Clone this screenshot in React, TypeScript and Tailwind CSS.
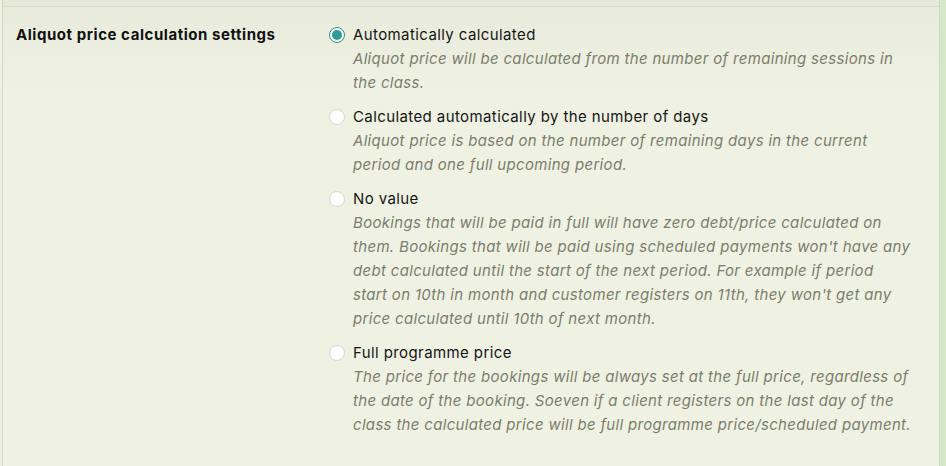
import React from "react";

const options: { title: string; desc: React.ReactNode; selected: boolean }[] = [
  {
    title: "Automatically calculated",
    desc: "Aliquot price will be calculated from the number of remaining sessions in the class.",
    selected: true,
  },
  {
    title: "Calculated automatically by the number of days",
    desc: "Aliquot price is based on the number of remaining days in the current period and one full upcoming period.",
    selected: false,
  },
  {
    title: "No value",
    desc: (
      <>
        Bookings that will be paid in full will have zero debt/price calculated on them. Bookings that will be paid
        using scheduled payments won't have any debt calculated until the start of the next period. For example if
        period
        <br />
        start on 10th in month and customer registers on 11th, they won't get any price calculated until 10th of next
        month.
      </>
    ),
    selected: false,
  },
  {
    title: "Full programme price",
    desc: "The price for the bookings will be always set at the full price, regardless of the date of the booking. Soeven if a client registers on the last day of the class the calculated price will be full programme price/scheduled payment.",
    selected: false,
  },
];

function Radio({ selected }: { selected: boolean }) {
  if (selected) {
    return (
      <span className="mt-[4px] flex h-[16px] w-[16px] shrink-0 items-center justify-center rounded-full border-[1.5px] border-[#2b8f89] bg-white">
        <span className="h-[10px] w-[10px] rounded-full bg-[#2e9c95]" />
      </span>
    );
  }
  return (
    <span className="mt-[4px] h-[16px] w-[16px] shrink-0 rounded-full border-[1.5px] border-[#d6d8cf] bg-white" />
  );
}

export default function App() {
  return (
    <div
      className="flex h-[466px] w-[946px] bg-[#eff2e2] text-[15px]"
      style={{ fontFamily: "Inter, 'Noto Sans', sans-serif" }}
    >
      <div className="w-[2px] shrink-0" />
      <div className="flex flex-1 flex-col border-l border-r border-[#d3d9c1]">
        <div className="h-[6px] shrink-0 bg-[#e6e9d8]" />
        <div className="flex flex-1 border-t border-[#d8dcc8] bg-gradient-to-b from-[#e8ebdb] to-[#eff2e2] to-[80px] pl-[13px] pt-[16px]">
          <div className="w-[313px] shrink-0 text-[15px] font-bold leading-6 tracking-[0.55px] text-[#111111]">
            Aliquot price calculation settings
          </div>
          <div className="flex flex-col gap-[10px]">
            {options.map((o) => (
              <div key={o.title} className="flex gap-[8px]">
                <Radio selected={o.selected} />
                <div className="w-[562px]">
                  <div className="leading-6 tracking-[0.4px] text-[#151515]">{o.title}</div>
                  <div className="italic leading-6 tracking-[0.32px] text-[#7b7d6e]">{o.desc}</div>
                </div>
              </div>
            ))}
          </div>
        </div>
      </div>
      <div className="w-[6px] shrink-0 bg-[#d5e8c6]" />
    </div>
  );
}
